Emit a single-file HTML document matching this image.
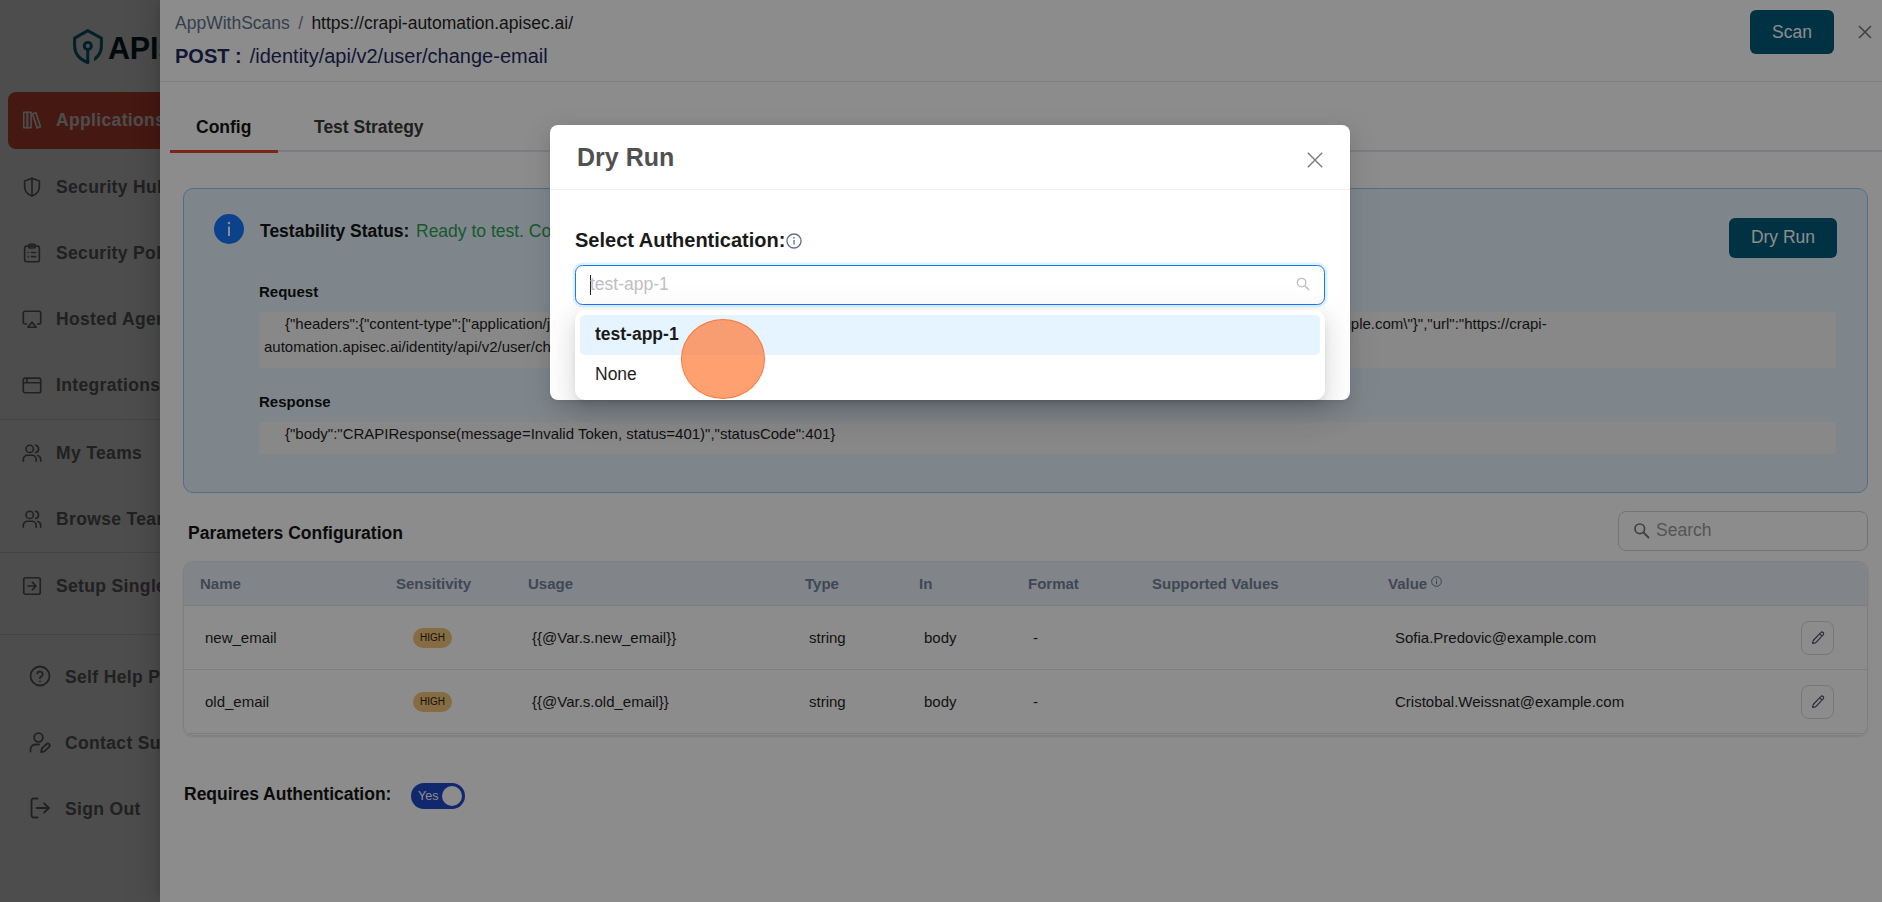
<!DOCTYPE html>
<html lang="en">
<head>
<meta charset="utf-8">
<title>APIsec - Dry Run</title>
<style>
*{box-sizing:border-box;margin:0;padding:0}
html,body{width:1882px;height:902px;overflow:hidden;background:#fff}
body{font-family:"Liberation Sans",Arial,sans-serif;color:#1f1f1f;position:relative}
.abs{position:absolute}
/* ---------- sidebar ---------- */
.sidebar{position:absolute;left:0;top:0;width:260px;height:902px;background:#fff}
.logo-shield{position:absolute;left:72px;top:28px;width:32px;height:37px}
.logo-text{position:absolute;left:108px;top:29.500px;font-size:30.500px;line-height:36px;font-weight:700;color:#0a1f2b;letter-spacing:-.2px;white-space:nowrap}
.nav-active{position:absolute;left:8px;top:92px;width:244px;height:57px;border-radius:8px;background:#e8523a}
.nav{position:absolute;left:56px;font-size:17.5px;font-weight:700;line-height:22px;color:#6e6e6e;white-space:nowrap;letter-spacing:.35px}
.nav.b{left:65px}
.nav.on{color:#fff}
.ico{position:absolute;left:21px;width:22px;height:22px;stroke:#6e6e6e;fill:none;stroke-width:1.8;stroke-linecap:round;stroke-linejoin:round}
.ico.b{left:28px;width:24px;height:24px}
.sdiv{position:absolute;left:0;width:260px;height:1px;background:#e4e4e4}
/* ---------- masks ---------- */
.mask{position:absolute;left:0;top:0;width:1882px;height:902px;background:rgba(0,0,0,.45)}
/* ---------- drawer ---------- */
.drawer{position:absolute;left:160px;top:0;width:1722px;height:902px;background:#fff;box-shadow:-6px 0 16px 0 rgba(0,0,0,.08),-3px 0 6px -4px rgba(0,0,0,.12),-9px 0 28px 8px rgba(0,0,0,.05)}
.d{position:absolute;white-space:nowrap}

/* drawer content (coords relative to drawer: x-160) */
.hdr{position:absolute;left:0;top:0;width:1722px;height:82px;border-bottom:1px solid #ececec}
.bc{position:absolute;left:15px;top:12px;font-size:17.5px;line-height:22px;color:#1f1f1f;white-space:nowrap}
.bc .g{color:#64748b}
.bc .sl{color:#7b8494;margin:0 3.500px 0 3.500px}
.ttl{position:absolute;left:15px;top:42.500px;font-size:20px;line-height:26px;color:#1e2a5e;white-space:nowrap}
.ttl b{margin-right:2.500px}
.btn{position:absolute;background:#005b7c;color:#fff;border-radius:6px;text-align:center;white-space:nowrap}
.tab{position:absolute;top:116px;font-size:17.5px;line-height:22px;font-weight:700;white-space:nowrap}
.tabline{position:absolute;left:10px;top:150px;width:1712px;height:2px;background:#dfe5ec}
.tabink{position:absolute;left:10px;top:150px;width:108px;height:3px;background:#e0452c}
.alert{position:absolute;left:23px;top:188px;width:1685px;height:304.500px;background:#e6f4ff;border:1px solid #91caff;border-radius:10px}
.code{position:absolute;left:99px;width:1577px;background:#f7f7f7;border-radius:4px;font-size:15px;line-height:23px;color:#1f1f1f;padding:0 5px}
.lbl{position:absolute;left:99px;font-size:15px;font-weight:700;line-height:20px;color:#141414}
.tbl{position:absolute;left:23px;top:561px;width:1685px;height:175px;border:1px solid #e6e8eb;border-radius:10px;overflow:hidden;box-shadow:0 1px 2px rgba(0,0,0,.1)}
.th{position:absolute;left:0;top:0;width:1685px;height:44px;background:#ebf1f7;border-bottom:1px solid #dde3ea}
.th span{position:absolute;top:12px;font-size:15px;line-height:20px;font-weight:700;color:#75829d;white-space:nowrap}
.tr{position:absolute;left:0;width:1685px;height:64px;border-bottom:1px solid #e2e4e8}
.tr span{position:absolute;top:22px;font-size:15px;line-height:20px;color:#1f1f1f;white-space:nowrap}
.tag{position:absolute;left:229px;top:22px;width:39px;height:20px;border-radius:10px;background:#f3c57a;color:#2e210c;font-size:10px;line-height:20px;text-align:center}
.edit{position:absolute;left:1617px;top:15px;width:33px;height:34px;border:1px solid #d9d9d9;border-radius:8px}
/* ---------- modal ---------- */
.modal{position:absolute;left:550px;top:125px;width:800px;height:275px;background:#fff;border-radius:8px;box-shadow:0 6px 16px 0 rgba(0,0,0,.08),0 3px 6px -4px rgba(0,0,0,.12),0 9px 28px 8px rgba(0,0,0,.05)}

.mhdr{position:absolute;left:0;top:0;width:800px;height:65px;border-bottom:1px solid #f0f0f0}
.mt{position:absolute;white-space:nowrap}
.sel{position:absolute;left:25px;top:140px;width:750px;height:40px;border:1.400px solid #1677ff;border-radius:7.500px;background:#fff;box-shadow:0 0 0 2.500px rgba(5,145,255,.12)}
.dd{position:absolute;left:25px;top:185px;width:750px;height:90px;background:#fff;border-radius:10px;box-shadow:0 7px 20px 0 rgba(0,0,0,.1),0 4px 8px -4px rgba(0,0,0,.14),0 11px 34px 10px rgba(0,0,0,.06)}
.opt1{position:absolute;left:5px;top:5px;width:740px;height:40px;border-radius:5px;background:#e6f4ff}
.clk{position:absolute;left:680.700px;top:319.300px;width:84.700px;height:79.800px;border-radius:50%;background:rgba(255,115,45,.68);border:1px solid rgba(245,110,45,.8)}
.clip{position:absolute;left:0;top:0;width:1882px;height:400px;overflow:hidden}
</style>
</head>
<body>
<!-- SIDEBAR -->
<div class="sidebar" id="sidebar">
<svg class="logo-shield" viewBox="72 28 32 37"><defs><mask id="shm"><rect x="70" y="26" width="40" height="42" fill="#fff"/><rect x="89.300" y="50.500" width="4.800" height="16" fill="#000"/></mask></defs><g mask="url(#shm)"><path d="M87.800 30.600 L74.600 38.100 V45.500 C74.600 54 80.500 59.800 87.800 62.700 C95.500 59.800 101.400 54 101.400 45.500 V38.100 Z" fill="none" stroke="#096c8f" stroke-width="3" stroke-linejoin="miter"/></g><circle cx="87.800" cy="45.900" r="3.550" fill="none" stroke="#096c8f" stroke-width="2.950"/><rect x="86.200" y="49.400" width="3" height="14" rx=".800" fill="#096c8f"/></svg>
<div class="logo-text">APIsec</div>
<div class="nav-active"></div>
<svg class="ico" style="top:109px;stroke:#fff" viewBox="0 0 24 24"><rect x="3" y="3.5" width="4" height="17"/><rect x="7" y="3.5" width="4" height="17"/><path d="M12.5 5.2 L16.2 4 L21.3 19.4 L17.6 20.6 Z"/></svg>
<div class="nav on" style="top:109px">Applications</div>
<svg class="ico" style="top:176px" viewBox="0 0 24 24"><path d="M12 2.5 L20 5.5 V12 C20 16.5 16.5 20 12 21.8 C7.5 20 4 16.5 4 12 V5.5 Z"/><path d="M12 2.5 V21.8"/></svg>
<div class="nav" style="top:176px">Security Hub</div>
<svg class="ico" style="top:242px" viewBox="0 0 24 24"><rect x="4" y="4.5" width="16" height="17" rx="2"/><rect x="8.5" y="2.5" width="7" height="4" rx="1"/><path d="M8 11.5h.01M11.5 11.5H16M8 16h.01M11.5 16H16"/></svg>
<div class="nav" style="top:242px">Security Policies</div>
<svg class="ico" style="top:308px" viewBox="0 0 24 24"><path d="M6 17.5H4.5a2 2 0 0 1-2-2V5.5a2 2 0 0 1 2-2h15a2 2 0 0 1 2 2v10a2 2 0 0 1-2 2H18"/><path d="M12 15.5 L16.5 21 H7.5 Z"/></svg>
<div class="nav" style="top:308px">Hosted Agents</div>
<svg class="ico" style="top:374px" viewBox="0 0 24 24"><rect x="2.5" y="4.5" width="19" height="16" rx="2"/><path d="M2.5 9.5H21.5M6.5 4.5v5"/></svg>
<div class="nav" style="top:374px">Integrations</div>
<div class="sdiv" style="top:419px"></div>
<svg class="ico" style="top:442px" viewBox="0 0 24 24"><circle cx="9.5" cy="7.5" r="4"/><path d="M2.5 21v-2a4.5 4.5 0 0 1 4.500-4.500h5a4.500 4.500 0 0 1 4.500 4.500v2"/><path d="M16 3.600a4 4 0 0 1 0 7.800M21.500 21v-2a4.500 4.500 0 0 0-3.300-4.300"/></svg>
<div class="nav" style="top:442px">My Teams</div>
<svg class="ico" style="top:508px" viewBox="0 0 24 24"><circle cx="9.5" cy="7.5" r="4"/><path d="M2.5 21v-2a4.500 4.500 0 0 1 4.500-4.500h5a4.500 4.500 0 0 1 4.500 4.500v2"/><path d="M16 3.600a4 4 0 0 1 0 7.800M21.500 21v-2a4.500 4.500 0 0 0-3.300-4.300"/></svg>
<div class="nav" style="top:508px">Browse Teams</div>
<div class="sdiv" style="top:552px"></div>
<svg class="ico" style="top:575px" viewBox="0 0 24 24"><rect x="3" y="3" width="18" height="18" rx="2"/><path d="M7.500 12H16M12.500 8l4 4-4 4"/></svg>
<div class="nav" style="top:575px">Setup Single Sign On</div>
<div class="sdiv" style="top:634px"></div>
<svg class="ico b" style="top:664px" viewBox="0 0 24 24"><circle cx="12" cy="12" r="9.500"/><path d="M9.300 9.300a2.800 2.800 0 0 1 5.400 .9c0 1.900-2.700 2.300-2.700 4"/><path d="M12 17.300h.01"/></svg>
<div class="nav b" style="top:666px">Self Help Portal</div>
<svg class="ico b" style="top:730px" viewBox="0 0 24 24"><circle cx="10.500" cy="7.500" r="4.300"/><path d="M2.500 21.500v-2a5 5 0 0 1 5-5h3.500"/><path d="M18.400 14.100a1.900 1.900 0 0 1 2.700 2.700l-4.600 4.600-3.300 .6 .6-3.300z"/></svg>
<div class="nav b" style="top:732px">Contact Support</div>
<svg class="ico b" style="top:796px" viewBox="0 0 24 24"><path d="M9.500 21.500H5.500a2 2 0 0 1-2-2v-15a2 2 0 0 1 2-2h4"/><path d="M16 16.500l5-4.500-5-4.500M21 12H9"/></svg>
<div class="nav b" style="top:798px">Sign Out</div>
</div>
<div class="mask"></div>
<!-- DRAWER -->
<div class="drawer" id="drawer">
<div class="hdr"></div>
<div class="bc"><span class="g">AppWithScans</span><span class="sl"> / </span><span>https://crapi-automation.apisec.ai/</span></div>
<div class="ttl"><b>POST :</b> /identity/api/v2/user/change-email</div>
<div class="btn" style="left:1590px;top:10px;width:84px;height:44px;font-size:17.5px;line-height:44px">Scan</div>
<svg class="abs" style="left:1698px;top:25px;width:14px;height:14px" viewBox="0 0 14 14"><path d="M1 1L13 13M13 1L1 13" stroke="#727272" stroke-width="1.5" fill="none"/></svg>
<div class="tabline"></div><div class="tabink"></div>
<div class="tab" style="left:36px;color:#141414">Config</div>
<div class="tab" style="left:154px;color:#3a3a3a">Test Strategy</div>
<div class="alert"></div>
<svg class="abs" style="left:54px;top:214px;width:30px;height:30px" viewBox="0 0 30 30"><circle cx="15" cy="15" r="15" fill="#1677ff"/><rect x="14" y="12.500" width="2" height="9.500" fill="#fff"/><circle cx="15" cy="9" r="1.300" fill="#fff"/></svg>
<div class="d" style="left:100px;top:219px;font-size:17.5px;line-height:24px;font-weight:700;color:#141414">Testability Status:</div>
<div class="d" style="left:256px;top:219px;font-size:17.5px;line-height:24px;color:#2aa352">Ready to test. Configured with valid parameters and authentication.</div>
<div class="btn" style="left:1569px;top:218px;width:108px;height:40px;font-size:17.5px;line-height:39px">Dry Run</div>
<div class="lbl" style="top:282px">Request</div>
<div class="code" id="req" style="top:312px;height:55.500px;padding-top:.300px;white-space:nowrap"><span style="padding-left:21px">{"headers":{"content-type":["application/json"]},</span><span id="hid" style="letter-spacing:-0.1196px">"method":"POST","body":"{\"new_email\":\"Sofia.Predovic@example.com\",\"old_email\":\"Cristobal.Weissnat@exam</span><span id="tail">ple.com\"}","url":"https://crapi-</span><br>automation.apisec.ai/identity/api/v2/user/change-email"}</div>
<div class="lbl" style="top:392px">Response</div>
<div class="code" style="top:422px;height:31.500px;padding-top:.300px;text-indent:21px">{"body":"CRAPIResponse(message=Invalid Token, status=401)","statusCode":401}</div>
<div class="d" style="left:28px;top:521px;font-size:17.5px;line-height:24px;font-weight:700;color:#141414">Parameters Configuration</div>
<div class="abs" style="left:1458px;top:511px;width:250px;height:40px;border:1px solid #d4d4d4;border-radius:8px"></div>
<svg class="abs" style="left:1473px;top:522px;width:17px;height:17px" viewBox="0 0 17 17"><circle cx="6.800" cy="6.800" r="4.800" stroke="#777" stroke-width="1.700" fill="none"/><path d="M10.500 10.500L15.500 15.500" stroke="#777" stroke-width="1.900" stroke-linecap="round"/></svg>
<div class="d" style="left:1496px;top:519px;font-size:17.5px;line-height:22px;color:#9a9a9a">Search</div>
<div class="tbl">
<div class="th"><span style="left:16px">Name</span><span style="left:212px">Sensitivity</span><span style="left:344px">Usage</span><span style="left:621px">Type</span><span style="left:735px">In</span><span style="left:844px">Format</span><span style="left:968px">Supported Values</span><span style="left:1204px">Value</span>
<svg class="abs" style="left:1247px;top:14px;width:11px;height:11px" viewBox="0 0 12 12"><circle cx="6" cy="6" r="5.300" stroke="#64748b" stroke-width="1" fill="none"/><path d="M6 5.300V9" stroke="#64748b" stroke-width="1.100"/><circle cx="6" cy="3.500" r=".700" fill="#64748b"/></svg></div>
<div class="tr" style="top:44px"><span style="left:21px">new_email</span><div class="tag">HIGH</div><span style="left:348px">{{@Var.s.new_email}}</span><span style="left:625px">string</span><span style="left:740px">body</span><span style="left:849px">-</span><span style="left:1211px">Sofia.Predovic@example.com</span><div class="edit"><svg class="abs" style="left:8px;top:8px;width:16px;height:16px" viewBox="0 0 16 16"><path d="M10.800 2.600a1.500 1.500 0 0 1 2.400 2.200L5.500 12.800 2.600 13.400 3.200 10.500zM9.800 3.800l2.300 2.300" stroke="#4a5568" stroke-width="1.200" fill="none" stroke-linejoin="round"/></svg></div></div>
<div class="tr" style="top:108px"><span style="left:21px">old_email</span><div class="tag">HIGH</div><span style="left:348px">{{@Var.s.old_email}}</span><span style="left:625px">string</span><span style="left:740px">body</span><span style="left:849px">-</span><span style="left:1211px">Cristobal.Weissnat@example.com</span><div class="edit"><svg class="abs" style="left:8px;top:8px;width:16px;height:16px" viewBox="0 0 16 16"><path d="M10.800 2.600a1.500 1.500 0 0 1 2.400 2.200L5.500 12.800 2.600 13.400 3.200 10.500zM9.800 3.800l2.300 2.300" stroke="#4a5568" stroke-width="1.200" fill="none" stroke-linejoin="round"/></svg></div></div>
</div>
<div class="d" style="left:24px;top:782px;font-size:17.5px;line-height:24px;font-weight:700;color:#141414">Requires Authentication:</div>
<div class="abs" style="left:251px;top:783px;width:54px;height:26px;border-radius:13px;background:#1f49c9"></div>
<div class="d" style="left:258px;top:788.500px;font-size:12.500px;line-height:14px;color:#fff">Yes</div>
<div class="abs" style="left:282px;top:786px;width:20px;height:20px;border-radius:10px;background:#fff"></div>
</div>
<div class="mask"></div>
<!-- MODAL -->
<div class="modal" id="modal">
<div class="mhdr"></div>
<div class="mt" style="left:27px;top:17px;font-size:25px;line-height:30px;font-weight:700;color:#505050">Dry Run</div>
<svg class="abs" style="left:757px;top:27px;width:16px;height:16px" viewBox="0 0 16 16"><path d="M.800 .800L15.200 15.200M15.200 .800L.800 15.200" stroke="#7a7a7a" stroke-width="1.400" fill="none"/></svg>
<div class="mt" style="left:25px;top:102px;font-size:20px;line-height:26px;font-weight:700;color:#1a1a1a">Select Authentication:</div>
<svg class="abs" style="left:235.500px;top:107.500px;width:16px;height:16px" viewBox="0 0 15 15"><circle cx="7.500" cy="7.500" r="6.600" stroke="#5d6f96" stroke-width="1.250" fill="none"/><path d="M7.500 6.600V10.800" stroke="#5d6f96" stroke-width="1.250"/><circle cx="7.500" cy="4.500" r=".850" fill="#5d6f96"/></svg>
<div class="sel"></div>
<div class="abs" style="left:40px;top:150px;width:1px;height:20px;background:#222"></div>
<div class="mt" style="left:40px;top:148px;font-size:17.500px;line-height:22px;color:#bfbfbf">test-app-1</div>
<svg class="abs" style="left:746px;top:152px;width:14px;height:14px" viewBox="0 0 14 14"><circle cx="5.600" cy="5.600" r="4.300" stroke="#bdbdbd" stroke-width="1.300" fill="none"/><path d="M8.800 8.800L13 13" stroke="#bdbdbd" stroke-width="1.500"/></svg>
<div class="dd"><div class="opt1"></div>
<div class="mt" style="left:20px;top:13px;font-size:17.500px;line-height:22px;font-weight:700;color:#1a1a1a">test-app-1</div>
<div class="mt" style="left:20px;top:52.700px;font-size:17.500px;line-height:22px;color:#1f1f1f">None</div>
</div>
</div>
<div class="clip"><div class="clk"></div></div>
</body>
</html>
